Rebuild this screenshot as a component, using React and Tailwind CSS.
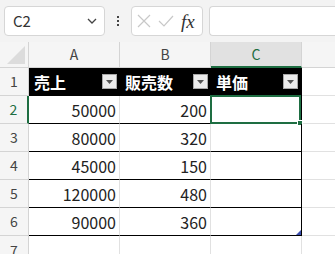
import React from 'react'

const font = { fontFamily: '"Noto Sans CJK JP", "Liberation Sans", sans-serif' }

const rows = [
  ['50000', '200'],
  ['80000', '320'],
  ['45000', '150'],
  ['120000', '480'],
  ['90000', '360'],
]

const FilterBtn = () => (
  <div className='w-[15px] h-[15px] bg-[#ececec] border border-[#a8a8a8] flex items-center justify-center shrink-0'>
    <svg width="7" height="4" viewBox="0 0 7 4"><path d="M0 0h7L3.5 4z" fill="#555" /></svg>
  </div>
)

const HeadCell = ({ label, last }) => (
  <div className={`w-[91px] h-full flex items-center justify-between pl-[5px] pr-[3px] ${last ? 'border-r border-black' : ''}`}>
    <span className='text-white font-bold text-[16px] leading-none'>{label}</span>
    <FilterBtn />
  </div>
)

export default function App() {
  return (
    <div className='w-[335px] h-[254px] overflow-hidden bg-white' style={font}>
      {/* formula bar */}
      <div className='h-[42px] bg-[#f3f3f3] flex items-center pl-[4px] gap-[6px]'>
        <div className='w-[101px] h-[30px] bg-white border border-[#d6d6d6] rounded-[4px] flex items-center justify-between pl-[8px] pr-[6px]'>
          <span className='text-[15px] text-[#333]'>C2</span>
          <svg width="12" height="8" viewBox="0 0 12 8"><path d="M2 2l4 4 4-4" fill="none" stroke="#444" strokeWidth="1.3" /></svg>
        </div>
        <div className='w-[14px] flex flex-col items-center gap-[2px]'>
          <div className='w-[2px] h-[2px] bg-[#444]' />
          <div className='w-[2px] h-[2px] bg-[#444]' />
          <div className='w-[2px] h-[2px] bg-[#444]' />
        </div>
        <div className='w-[72px] h-[30px] bg-white border border-[#d6d6d6] rounded-[4px] flex items-center pl-[5px] gap-[7px]'>
          <svg width="14" height="14" viewBox="0 0 14 14"><path d="M1 1l12 12M13 1L1 13" stroke="#c8c8c8" strokeWidth="1.2" /></svg>
          <svg width="16" height="12" viewBox="0 0 16 12"><path d="M1 6l5 5L15 1" fill="none" stroke="#c8c8c8" strokeWidth="1.2" /></svg>
          <span className='text-[19px] italic text-[#333] leading-none' style={{ fontFamily: '"Liberation Serif", serif' }}>fx</span>
        </div>
        <div className='flex-1 h-[30px] bg-white border border-[#d6d6d6] rounded-l-[4px] border-r-0' />
      </div>

      {/* column headers */}
      <div className='flex h-[26px] bg-[#f5f5f5] text-[14px] text-[#444]'>
        <div className='w-[29px] relative border-r border-b border-[#d4d4d4]'>
          <svg className='absolute right-[3px] bottom-[3px]' width="18" height="18" viewBox="0 0 18 18"><path d="M18 0V18H0z" fill="#dcdcdc" /></svg>
        </div>
        <div className='w-[91px] flex items-center justify-center border-r border-b border-[#d4d4d4]'>A</div>
        <div className='w-[91px] flex items-center justify-center border-r border-b border-[#d4d4d4]'>B</div>
        <div className='w-[91px] flex items-center justify-center bg-[#e1e1e1] text-[#1e6e42] border-r border-[#d4d4d4] border-b-2 border-b-[#1e6e42]'>C</div>
        <div className='flex-1 border-b border-[#d4d4d4]' />
      </div>

      {/* row 1 table header */}
      <div className='flex h-[28px]'>
        <div className='w-[29px] bg-[#f5f5f5] border-r border-b border-[#d4d4d4] flex items-center justify-center text-[14px] text-[#444]'>1</div>
        <div className='flex bg-black border-b border-black'>
          <HeadCell label='売上' />
          <HeadCell label='販売数' />
          <HeadCell label='単価' last />
        </div>
        <div className='flex-1 border-b border-[#e1e1e1]' />
      </div>

      {rows.map((r, i) => {
        const n = i + 2
        const sel = n === 2
        return (
          <div key={n} className='flex h-[28px]'>
            <div className={`w-[29px] bg-[#f5f5f5] border-b border-[#d4d4d4] flex items-center justify-center text-[14px] ${sel ? 'text-[#1e6e42] border-r-2 border-r-[#1e6e42]' : 'text-[#444] border-r'}`}>{n}</div>
            <div className='w-[91px] border-r border-[#e1e1e1] border-b border-b-black flex items-center justify-end pr-[3px] text-[16px] text-[#222]'>{r[0]}</div>
            <div className='w-[91px] border-r border-[#e1e1e1] border-b border-b-black flex items-center justify-end pr-[3px] text-[16px] text-[#222]'>{r[1]}</div>
            <div className='w-[91px] relative border-r border-r-black border-b border-b-black'>
              {sel && (
                <div className='absolute -left-[1px] -top-[1px] w-[91px] h-[29px] border-2 border-[#1e6e42]'>
                  <div className='absolute -right-[4px] -bottom-[4px] w-[6px] h-[6px] bg-[#1e6e42] border border-white' />
                </div>
              )}
              {n === 6 && (
                <svg className='absolute right-0 bottom-0' width="5" height="5" viewBox="0 0 5 5"><path d="M5 0V5H0z" fill="#3b4fb0" /></svg>
              )}
            </div>
            <div className='flex-1 border-b border-[#e1e1e1]' />
          </div>
        )
      })}

      {/* row 7 */}
      <div className='flex h-[28px]'>
        <div className='w-[29px] bg-[#f5f5f5] border-r border-[#d4d4d4] flex items-center justify-center text-[14px] text-[#444]'>7</div>
        <div className='w-[91px] border-r border-[#e1e1e1]' />
        <div className='w-[91px] border-r border-[#e1e1e1]' />
        <div className='w-[91px] border-r border-[#e1e1e1]' />
        <div className='flex-1' />
      </div>
    </div>
  )
}
